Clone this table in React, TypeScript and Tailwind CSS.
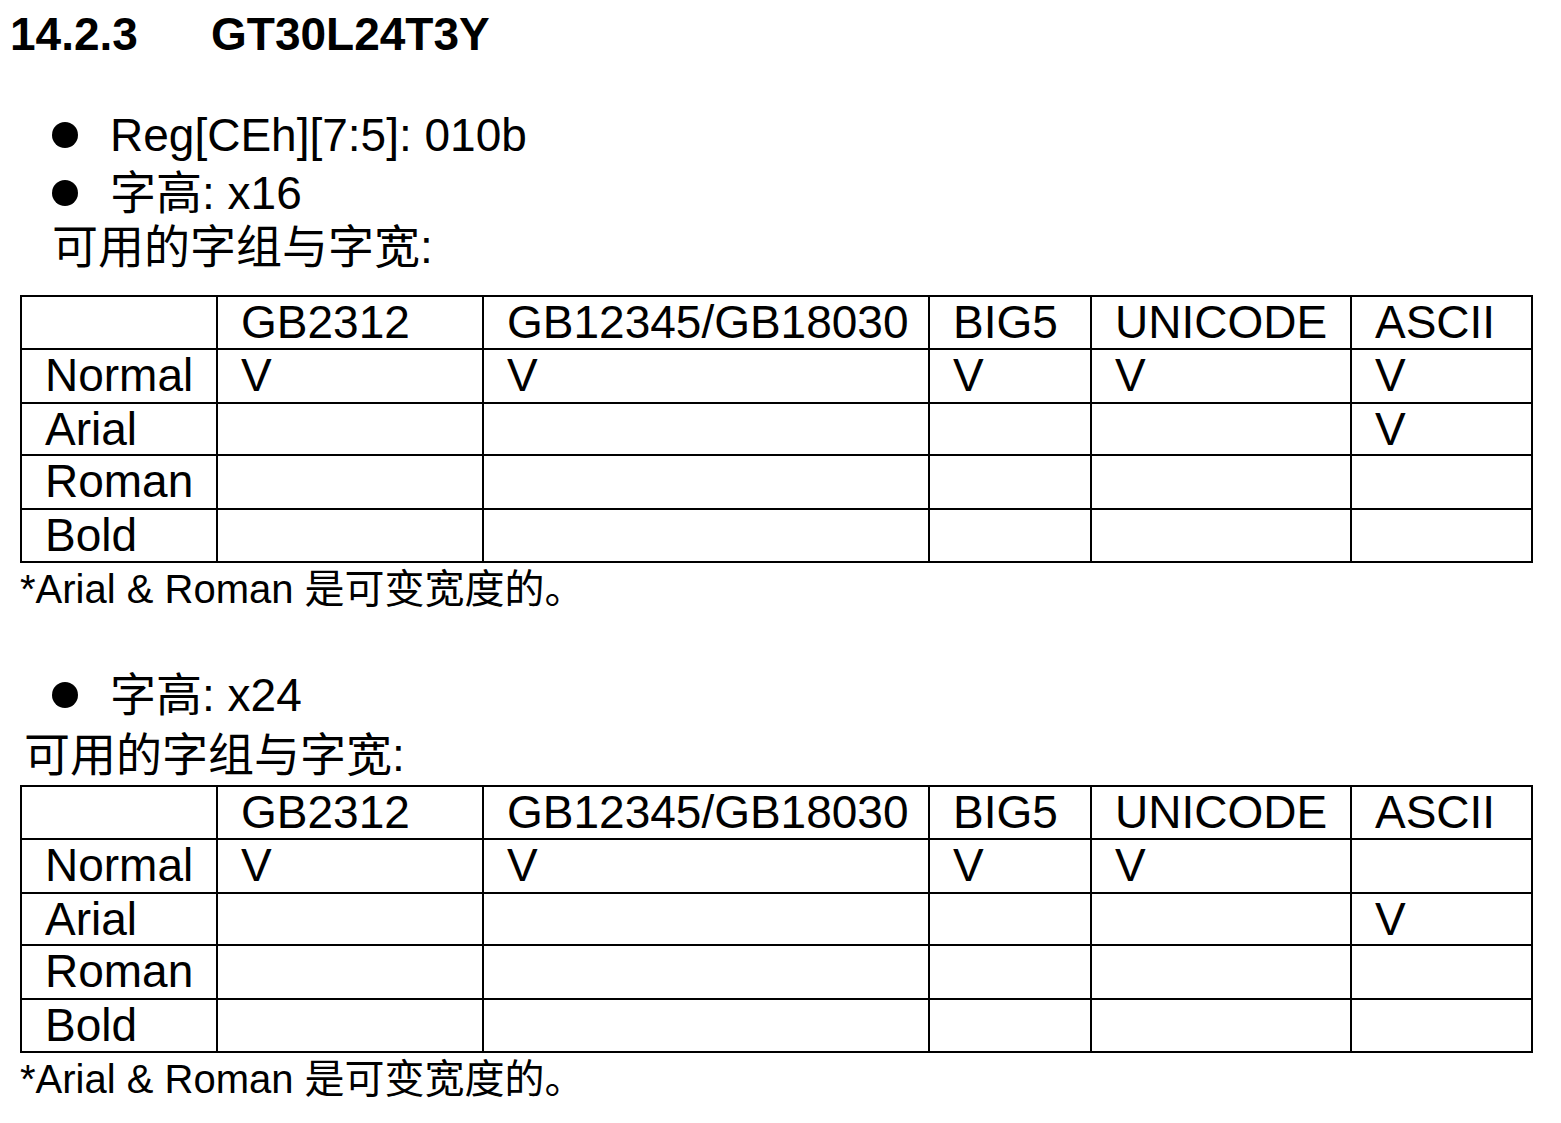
const FONT = "font-['Liberation_Sans','Noto_Sans_CJK_SC',sans-serif]";

const HEADERS = ['', 'GB2312', 'GB12345/GB18030', 'BIG5', 'UNICODE', 'ASCII'];

type Row = { name: string; marks: boolean[] };

const TABLE_X16: Row[] = [
  { name: 'Normal', marks: [true, true, true, true, true] },
  { name: 'Arial', marks: [false, false, false, false, true] },
  { name: 'Roman', marks: [false, false, false, false, false] },
  { name: 'Bold', marks: [false, false, false, false, false] },
];

const TABLE_X24: Row[] = [
  { name: 'Normal', marks: [true, true, true, true, false] },
  { name: 'Arial', marks: [false, false, false, false, true] },
  { name: 'Roman', marks: [false, false, false, false, false] },
  { name: 'Bold', marks: [false, false, false, false, false] },
];

function Cell({ children }: { children?: React.ReactNode }) {
  return (
    <div className="border-r-2 border-b-2 border-black pl-[23px] pt-[2px] text-[46px] leading-[46px] whitespace-nowrap">
      {children}
    </div>
  );
}

function FontTable({ rows }: { rows: Row[] }) {
  return (
    <div className="ml-[20px] grid w-max grid-cols-[196px_266px_446px_162px_260px_181px] grid-rows-[53px_54px_52px_54px_53px] border-l-2 border-t-2 border-black">
      {HEADERS.map((h, i) => (
        <Cell key={'h' + i}>{h}</Cell>
      ))}
      {rows.flatMap((row) => [
        <Cell key={row.name}>{row.name}</Cell>,
        ...row.marks.map((m, j) => <Cell key={row.name + j}>{m ? 'V' : ''}</Cell>),
      ])}
    </div>
  );
}

function Bullet({ children, className = '' }: { children: React.ReactNode; className?: string }) {
  return (
    <div className={`flex h-[46px] items-center pl-[52px] text-[46px] leading-[46px] ${className}`}>
      <span className="h-[26px] w-[26px] shrink-0 rounded-full bg-black" />
      <span className="ml-[32px] whitespace-nowrap">{children}</span>
    </div>
  );
}

function Footnote({ className = '' }: { className?: string }) {
  return (
    <div className={`h-[40px] pl-[20px] text-[40px] leading-[40px] whitespace-nowrap ${className}`}>
      *Arial &amp; Roman 是可变宽度的。
    </div>
  );
}

export default function App() {
  return (
    <div className={`min-h-screen w-[1561px] bg-white pt-[11px] text-black ${FONT}`}>
      {/* Section heading */}
      <h1 className="flex h-[46px] pl-[10px] text-[46px] font-bold leading-[46px]">
        <span className="w-[201px]">14.2.3</span>
        <span>GT30L24T3Y</span>
      </h1>

      <Bullet className="mt-[51px] h-[54px]">Reg[CEh][7:5]: 010b</Bullet>
      <Bullet className="h-[62px]">字高: x16</Bullet>
      <div className="h-[46px] pl-[52px] text-[46px] leading-[46px]">可用的字组与字宽:</div>

      <div className="mt-[25px]">
        <FontTable rows={TABLE_X16} />
      </div>
      <Footnote className="mt-[6px]" />

      <Bullet className="mt-[63px]">字高: x24</Bullet>
      <div className="mt-[14px] h-[46px] pl-[24px] text-[46px] leading-[46px]">可用的字组与字宽:</div>

      <div className="mt-[7px]">
        <FontTable rows={TABLE_X24} />
      </div>
      <Footnote className="mt-[6px]" />
    </div>
  );
}
